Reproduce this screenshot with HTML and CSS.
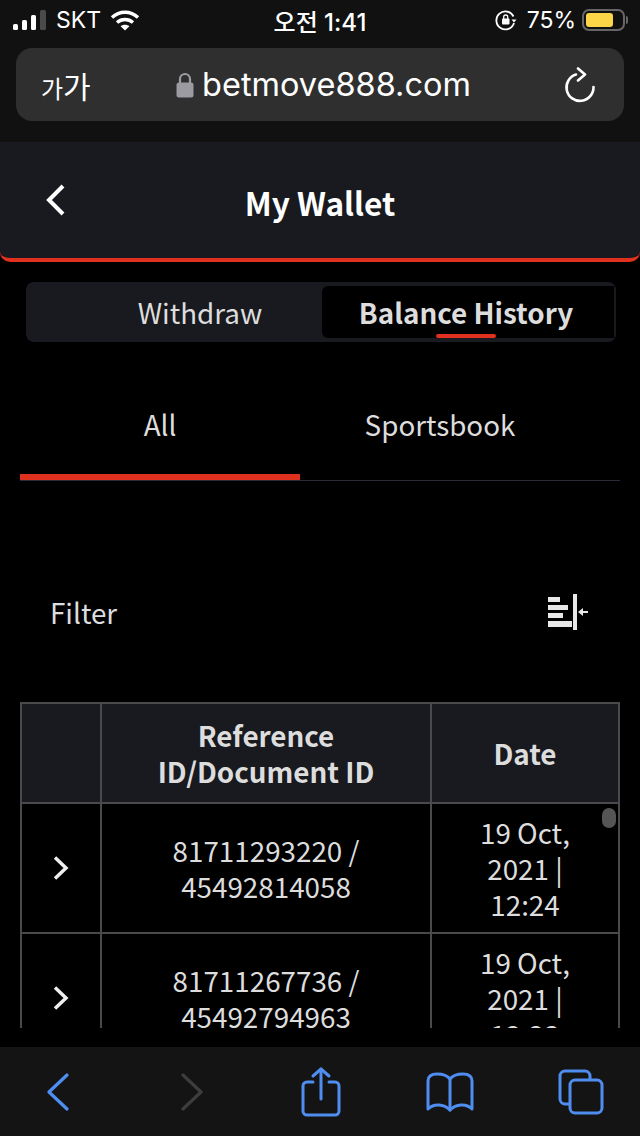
FILE: index.html
```html
<!DOCTYPE html>
<html lang="en">
  <head>
    <meta charset="UTF-8" />
    <meta name="viewport" content="width=device-width, initial-scale=1.0" />
    <title>My Wallet</title>
    <link rel="stylesheet" href="styles.css">
  </head>
  <body>
    <!-- Status bar -->
    <div class="status">
      <div class="status-left">
        <svg class="signal" width="34" height="22" viewBox="0 0 34 22">
          <rect x="0" y="15" width="5" height="6" rx="1.5" fill="#fff" />
          <rect x="9" y="11" width="5" height="10" rx="1.5" fill="#fff" />
          <rect x="18" y="6" width="5" height="15" rx="1.5" fill="#fff" />
          <rect x="27" y="1" width="6" height="20" rx="1.5" fill="#4a4a4a" />
        </svg>
        <span>SKT</span>
        <svg class="wifi" width="30" height="22" viewBox="0 0 30 22" fill="none" stroke="#fff" stroke-width="3.4">
          <path d="M2 8.500C9.500 1.500 20.500 1.500 28 8.500" />
          <path d="M7 13.500C11.500 9.500 18.500 9.500 23 13.500" />
          <path d="M15 21.500L10.600 17.200C13 15.200 17 15.200 19.400 17.200Z" fill="#fff" stroke="none" />
        </svg>
      </div>
      <div class="status-time" lang="ko">오전 1:41</div>
      <div class="status-right">
        <svg width="22" height="22" viewBox="0 0 22 22" fill="none" stroke="#fff" stroke-width="1.800">
          <path d="M18.500 7.500A9 9 0 1 0 19 14" />
          <path d="M16.500 10.500h5l-2.500 3z" fill="#fff" stroke="none" />
          <rect x="7" y="9.500" width="7.500" height="6" rx="1" fill="#fff" stroke="none" />
          <path d="M8.700 10V8a2 2 0 0 1 4 0v2" stroke-width="1.300" />
        </svg>
        <span>75%</span>
        <div class="battery"><div class="battery-fill"></div></div>
        <div class="battery-cap"></div>
      </div>
    </div>

    <!-- Address bar -->
    <div class="urlbar-wrap">
      <div class="urlbar">
        <div class="aa" lang="ko"><span class="aa-small">가</span><span>가</span></div>
        <div class="url">
          <svg width="18" height="26" viewBox="0 0 18 26" fill="none">
            <path d="M4 12V7a5 5 0 0 1 10 0v5" stroke="#9b9ba1" stroke-width="2.200" />
            <rect x="0.500" y="10.500" width="17" height="15" rx="2.500" fill="#9b9ba1" />
          </svg>
          <span>betmove888.com</span>
        </div>
        <div class="reload">
          <svg width="32" height="36" viewBox="0 0 32 36" fill="none" stroke="#fff" stroke-width="2.600" stroke-linecap="round" stroke-linejoin="round">
            <path d="M12 7.500A13.500 13.500 0 1 0 29.500 20" />
            <path d="M14 1.500L21 7.500L14 13.500" />
          </svg>
        </div>
      </div>
    </div>

    <!-- Page -->
    <div class="page">
      <div class="header">
        <svg class="header-back" width="20" height="32" viewBox="0 0 20 32" fill="none" stroke="#fff" stroke-width="4">
          <path d="M18 2L4 16L18 30" />
        </svg>
        <h1>My Wallet</h1>
      </div>

      <div class="switch">
        <div class="switch-item">Withdraw</div>
        <div class="switch-item active">Balance History</div>
      </div>

      <div class="tabs">
        <div class="tab tab-on">All</div>
        <div class="tab">Sportsbook</div>
      </div>

      <div class="filter">
        <span>Filter</span>
        <svg width="40" height="36" viewBox="0 0 40 36" fill="#e8e8e8">
          <rect x="0" y="3" width="12" height="5" />
          <rect x="0" y="11" width="20" height="5" />
          <rect x="0" y="19" width="15" height="5" />
          <rect x="0" y="27" width="24" height="6" />
          <rect x="25" y="0" width="4" height="36" />
          <rect x="33" y="17" width="7" height="2" />
          <path d="M30 18L35 14V22Z" />
        </svg>
      </div>

      <div class="table-box">
        <table>
          <tr>
            <th class="col-arrow"></th>
            <th class="col-ref">Reference<br />ID/Document ID</th>
            <th class="col-date">Date</th>
          </tr>
          <tr>
            <td><svg class="row-arrow" width="16" height="24" viewBox="0 0 16 24" fill="none" stroke="#eee" stroke-width="3.500"><path d="M2 1.500L13 12L2 22.500" /></svg></td>
            <td>81711293220 /<br />45492814058</td>
            <td>19 Oct,<br />2021 |<br />12:24</td>
          </tr>
          <tr>
            <td><svg class="row-arrow" width="16" height="24" viewBox="0 0 16 24" fill="none" stroke="#eee" stroke-width="3.500"><path d="M2 1.500L13 12L2 22.500" /></svg></td>
            <td>81711267736 /<br />45492794963</td>
            <td>19 Oct,<br />2021 |<br />12:23</td>
          </tr>
        </table>
        <div class="scroll-thumb"></div>
      </div>
    </div>

    <!-- Browser toolbar -->
    <div class="toolbar">
      <svg width="22" height="38" viewBox="0 0 22 38" fill="none" stroke="#4f8ef0" stroke-width="3.200" stroke-linecap="round" stroke-linejoin="round">
        <path d="M20 2L2 19L20 36" />
      </svg>
      <svg class="tool-forward" width="22" height="38" viewBox="0 0 22 38" fill="none" stroke="#3d3d3d" stroke-width="3.200" stroke-linecap="round" stroke-linejoin="round">
        <path d="M2 2L20 19L2 36" />
      </svg>
      <svg class="tool-share" width="40" height="50" viewBox="0 0 40 50" fill="none" stroke="#4f8ef0" stroke-width="3" stroke-linecap="round" stroke-linejoin="round">
        <path d="M12 15H6a4 4 0 0 0-4 4V44a4 4 0 0 0 4 4H34a4 4 0 0 0 4-4V19a4 4 0 0 0-4-4H28" />
        <path d="M20 32V2" />
        <path d="M12 9L20 2L28 9" />
      </svg>
      <svg class="tool-book" width="48" height="40" viewBox="0 0 48 40" fill="none" stroke="#4f8ef0" stroke-width="3" stroke-linecap="round" stroke-linejoin="round">
        <path d="M24 7C21 3 16 2 11 2C7 2 2 3 2 9V37C8 31 18 32 24 38C30 32 40 31 46 37V9C46 3 41 2 37 2C32 2 27 3 24 7Z" />
        <path d="M24 7V38" />
      </svg>
      <svg class="tool-tabs" width="46" height="46" viewBox="0 0 46 46" fill="none" stroke="#4f8ef0" stroke-width="3" stroke-linejoin="round">
        <path d="M12 35H7a5 5 0 0 1-5-5V7a5 5 0 0 1 5-5H27a5 5 0 0 1 5 5V11" />
        <rect x="12" y="11" width="32" height="33" rx="5" />
      </svg>
    </div>
  </body>
</html>
```

FILE: styles.css
```css
body {
  font-family: "Noto Sans CJK KR", "Noto Sans", sans-serif;
  background-color: #000;
  color: #fff;
  margin: 0;
  width: 640px;
  height: 1136px;
  overflow: hidden;
  display: flex;
  flex-direction: column;
}

/* status bar */
.status {
  height: 48px;
  box-sizing: border-box;
  background-color: #111;
  padding: 0 12px 8px 13px;
  display: grid;
  grid-template-columns: 1fr auto 1fr;
  align-items: center;
  font-family: Inter, "Noto Sans CJK KR", sans-serif;
  font-size: 23px;
}
.status-left,
.status-right {
  display: flex;
  align-items: center;
}
.status-left {
  gap: 9px;
}
.status-time {
  font-weight: 500;
  font-size: 24px;
  margin-left: -1px;
}
.status-right {
  justify-content: flex-end;
}
.status-right span {
  margin-left: 10px;
}
.battery {
  margin-left: 6px;
  width: 43px;
  height: 22px;
  box-sizing: border-box;
  border: 2px solid #666;
  border-radius: 7px;
  padding: 2px;
}
.battery-fill {
  width: 27px;
  height: 100%;
  background-color: #fcd647;
  border-radius: 3px;
}
.battery-cap {
  width: 2px;
  height: 8px;
  margin-left: 1px;
  background-color: #666;
  border-radius: 0 2px 2px 0;
}

/* address bar */
.urlbar-wrap {
  height: 94px;
  box-sizing: border-box;
  background-color: #111;
  padding: 0 16px 21px;
}
.urlbar {
  height: 73px;
  background-color: #2f2f2f;
  border-radius: 16px;
  display: grid;
  grid-template-columns: 1fr auto 1fr;
  align-items: center;
  padding: 0 28px 0 25px;
}
.aa {
  font-size: 30px;
  line-height: 1;
}
.aa-small {
  font-size: 24px;
}
.url {
  display: flex;
  align-items: center;
  gap: 8px;
  padding-left: 10px;
  font-family: Inter, sans-serif;
  font-size: 32.5px;
}
.reload {
  display: flex;
  justify-content: flex-end;
}

/* page */
.page {
  height: 905px;
  overflow: hidden;
}
.header {
  height: 120px;
  box-sizing: border-box;
  padding-top: 4px;
  background-color: #181a1f;
  border-bottom: 4px solid #e0301e;
  border-radius: 0 0 10px 10px;
  position: relative;
  display: flex;
  align-items: center;
  justify-content: center;
}
.header h1 {
  margin: 0;
  font-size: 31.6px;
  font-weight: 700;
}
.header-back {
  position: absolute;
  left: 45px;
  top: 42px;
}
.switch {
  margin: 20px 24px 0 26px;
  height: 60px;
  box-sizing: border-box;
  padding: 4px 2px 4px 0;
  background-color: #181a1f;
  border-radius: 8px;
  display: grid;
  grid-template-columns: 296px 292px;
  font-size: 27.8px;
  color: #ddd;
}
.switch-item {
  display: flex;
  align-items: center;
  justify-content: center;
  padding: 2px 0 0 52px;
  line-height: 1;
}
.active {
  background-color: #000;
  border-radius: 6px 0 0 6px;
  font-weight: 700;
  padding-left: 0;
  padding-right: 4px;
  position: relative;
}
.active::after {
  content: "";
  position: absolute;
  left: 114px;
  bottom: 0;
  width: 60px;
  height: 4px;
  border-radius: 2px;
  background-color: #e0301e;
}
.tabs {
  margin: 58px 20px 0;
  height: 80px;
  display: grid;
  grid-template-columns: 280px 280px;
  border-bottom: 1px solid #2a2c38;
  font-size: 27.8px;
  color: #ddd;
}
.tab {
  text-align: center;
  line-height: 48px;
}
.tab-on {
  border-bottom: 6px solid #e0301e;
}
.filter {
  margin-top: 102px;
  padding: 0 52px 0 50px;
  height: 58px;
  display: flex;
  align-items: center;
  justify-content: space-between;
  font-size: 27.8px;
  color: #ddd;
}

/* table */
.table-box {
  margin: 61px 20px 0;
  height: 326px;
  overflow: hidden;
  position: relative;
}
table {
  width: 100%;
  table-layout: fixed;
  border-collapse: collapse;
  font-size: 27.8px;
  line-height: 36px;
  color: #ddd;
}
table,
th,
td {
  border: 2px solid #4a4a4c;
}
th,
td {
  padding: 0;
  text-align: center;
}
th {
  height: 98px;
  background-color: #181a1f;
  font-weight: 700;
}
td {
  height: 128px;
}
.col-arrow {
  width: 78px;
}
.col-ref {
  width: 328px;
}
.row-arrow {
  display: block;
  margin: 0 auto;
}
.scroll-thumb {
  position: absolute;
  left: 582px;
  top: 106px;
  width: 14px;
  height: 20px;
  border-radius: 7px;
  background-color: #555;
}

/* browser toolbar */
.toolbar {
  height: 89px;
  background-color: #141414;
  display: flex;
  align-items: center;
  padding-left: 47px;
}
.tool-forward {
  margin-left: 112px;
}
.tool-share {
  margin-left: 98px;
}
.tool-book {
  margin-left: 85px;
}
.tool-tabs {
  margin-left: 84px;
}
```
